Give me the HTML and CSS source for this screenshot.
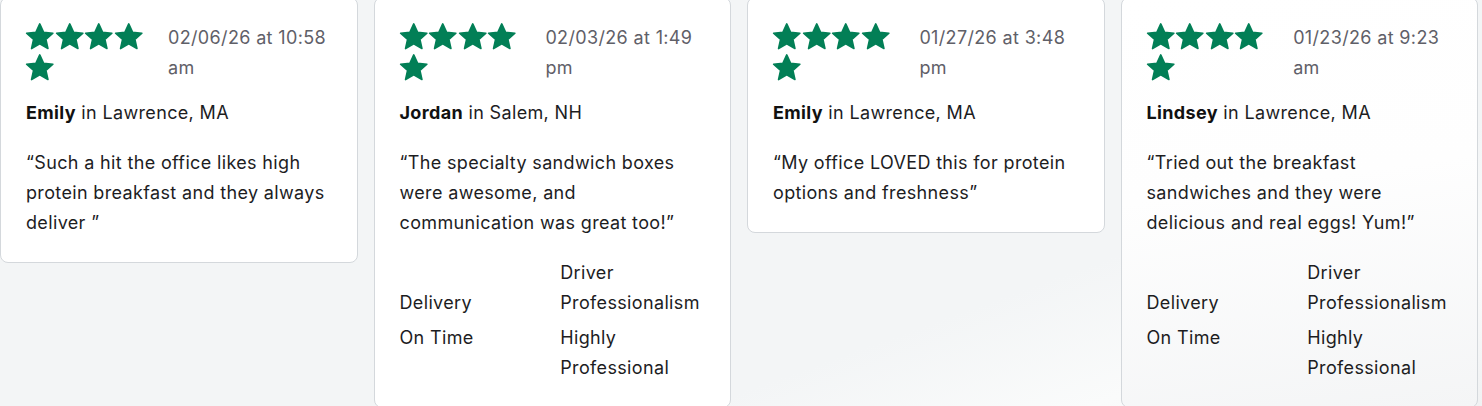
FILE: index.html
```html
<!DOCTYPE html>
<html lang="en">
<head>
<meta charset="utf-8">
<link rel="stylesheet" href="styles.css">
</head>
<body>
<div class="reviews">
  <article class="card">
    <div class="head">
      <div class="stars">
        <svg class="star" viewBox="1 1 22 22"><path d="M12 2.2l2.9 6.3 6.9.7-5.2 4.6 1.5 6.8L12 17.1l-6.1 3.5 1.5-6.8-5.2-4.6 6.9-.7z"/></svg>
        <svg class="star" viewBox="1 1 22 22"><path d="M12 2.2l2.9 6.3 6.9.7-5.2 4.6 1.5 6.8L12 17.1l-6.1 3.5 1.5-6.8-5.2-4.6 6.9-.7z"/></svg>
        <svg class="star" viewBox="1 1 22 22"><path d="M12 2.2l2.9 6.3 6.9.7-5.2 4.6 1.5 6.8L12 17.1l-6.1 3.5 1.5-6.8-5.2-4.6 6.9-.7z"/></svg>
        <svg class="star" viewBox="1 1 22 22"><path d="M12 2.2l2.9 6.3 6.9.7-5.2 4.6 1.5 6.8L12 17.1l-6.1 3.5 1.5-6.8-5.2-4.6 6.9-.7z"/></svg>
        <svg class="star" viewBox="1 1 22 22"><path d="M12 2.2l2.9 6.3 6.9.7-5.2 4.6 1.5 6.8L12 17.1l-6.1 3.5 1.5-6.8-5.2-4.6 6.9-.7z"/></svg>
      </div>
      <div class="date">02/06/26 at 10:58 am</div>
    </div>
    <p class="who"><strong>Emily</strong> in Lawrence, MA</p>
    <p class="quote">“Such a hit the office likes high protein breakfast and they always deliver ”</p>
  </article>

  <article class="card">
    <div class="head">
      <div class="stars">
        <svg class="star" viewBox="1 1 22 22"><path d="M12 2.2l2.9 6.3 6.9.7-5.2 4.6 1.5 6.8L12 17.1l-6.1 3.5 1.5-6.8-5.2-4.6 6.9-.7z"/></svg>
        <svg class="star" viewBox="1 1 22 22"><path d="M12 2.2l2.9 6.3 6.9.7-5.2 4.6 1.5 6.8L12 17.1l-6.1 3.5 1.5-6.8-5.2-4.6 6.9-.7z"/></svg>
        <svg class="star" viewBox="1 1 22 22"><path d="M12 2.2l2.9 6.3 6.9.7-5.2 4.6 1.5 6.8L12 17.1l-6.1 3.5 1.5-6.8-5.2-4.6 6.9-.7z"/></svg>
        <svg class="star" viewBox="1 1 22 22"><path d="M12 2.2l2.9 6.3 6.9.7-5.2 4.6 1.5 6.8L12 17.1l-6.1 3.5 1.5-6.8-5.2-4.6 6.9-.7z"/></svg>
        <svg class="star" viewBox="1 1 22 22"><path d="M12 2.2l2.9 6.3 6.9.7-5.2 4.6 1.5 6.8L12 17.1l-6.1 3.5 1.5-6.8-5.2-4.6 6.9-.7z"/></svg>
      </div>
      <div class="date">02/03/26 at 1:49 pm</div>
    </div>
    <p class="who"><strong>Jordan</strong> in Salem, NH</p>
    <p class="quote">“The specialty sandwich boxes were awesome, and communication was great too!”</p>
    <dl class="details">
      <dt>Delivery</dt>
      <dt>Driver Professionalism</dt>
      <dd>On Time</dd>
      <dd>Highly Professional</dd>
    </dl>
  </article>

  <article class="card">
    <div class="head">
      <div class="stars">
        <svg class="star" viewBox="1 1 22 22"><path d="M12 2.2l2.9 6.3 6.9.7-5.2 4.6 1.5 6.8L12 17.1l-6.1 3.5 1.5-6.8-5.2-4.6 6.9-.7z"/></svg>
        <svg class="star" viewBox="1 1 22 22"><path d="M12 2.2l2.9 6.3 6.9.7-5.2 4.6 1.5 6.8L12 17.1l-6.1 3.5 1.5-6.8-5.2-4.6 6.9-.7z"/></svg>
        <svg class="star" viewBox="1 1 22 22"><path d="M12 2.2l2.9 6.3 6.9.7-5.2 4.6 1.5 6.8L12 17.1l-6.1 3.5 1.5-6.8-5.2-4.6 6.9-.7z"/></svg>
        <svg class="star" viewBox="1 1 22 22"><path d="M12 2.2l2.9 6.3 6.9.7-5.2 4.6 1.5 6.8L12 17.1l-6.1 3.5 1.5-6.8-5.2-4.6 6.9-.7z"/></svg>
        <svg class="star" viewBox="1 1 22 22"><path d="M12 2.2l2.9 6.3 6.9.7-5.2 4.6 1.5 6.8L12 17.1l-6.1 3.5 1.5-6.8-5.2-4.6 6.9-.7z"/></svg>
      </div>
      <div class="date">01/27/26 at 3:48 pm</div>
    </div>
    <p class="who"><strong>Emily</strong> in Lawrence, MA</p>
    <p class="quote">“My office LOVED this for protein options and freshness”</p>
  </article>

  <article class="card card-faded">
    <div class="head">
      <div class="stars">
        <svg class="star" viewBox="1 1 22 22"><path d="M12 2.2l2.9 6.3 6.9.7-5.2 4.6 1.5 6.8L12 17.1l-6.1 3.5 1.5-6.8-5.2-4.6 6.9-.7z"/></svg>
        <svg class="star" viewBox="1 1 22 22"><path d="M12 2.2l2.9 6.3 6.9.7-5.2 4.6 1.5 6.8L12 17.1l-6.1 3.5 1.5-6.8-5.2-4.6 6.9-.7z"/></svg>
        <svg class="star" viewBox="1 1 22 22"><path d="M12 2.2l2.9 6.3 6.9.7-5.2 4.6 1.5 6.8L12 17.1l-6.1 3.5 1.5-6.8-5.2-4.6 6.9-.7z"/></svg>
        <svg class="star" viewBox="1 1 22 22"><path d="M12 2.2l2.9 6.3 6.9.7-5.2 4.6 1.5 6.8L12 17.1l-6.1 3.5 1.5-6.8-5.2-4.6 6.9-.7z"/></svg>
        <svg class="star" viewBox="1 1 22 22"><path d="M12 2.2l2.9 6.3 6.9.7-5.2 4.6 1.5 6.8L12 17.1l-6.1 3.5 1.5-6.8-5.2-4.6 6.9-.7z"/></svg>
      </div>
      <div class="date">01/23/26 at 9:23 am</div>
    </div>
    <p class="who"><strong>Lindsey</strong> in Lawrence, MA</p>
    <p class="quote">“Tried out the breakfast sandwiches and they were delicious and real eggs! Yum!”</p>
    <dl class="details">
      <dt>Delivery</dt>
      <dt>Driver Professionalism</dt>
      <dd>On Time</dd>
      <dd>Highly Professional</dd>
    </dl>
  </article>
</div>
</body>
</html>
```

FILE: styles.css
```css
html, body {
  margin: 0;
  padding: 0;
}
body {
  width: 1482px;
  height: 406px;
  overflow: hidden;
  background: linear-gradient(160deg, #f3f5f6 0%, #f3f5f6 70%, #fafbfb 85%, #f1f2f3 100%);
  font-family: Inter, "Noto Sans", sans-serif;
  color: #1d1d1f;
  letter-spacing: 0.35px;
}
.reviews {
  display: grid;
  grid-template-columns: repeat(4, 357.5px);
  column-gap: 16px;
  align-items: start;
  margin-top: -3px;
}
.card {
  background: #fff;
  border: 1px solid #d4d8dc;
  border-radius: 8px;
  padding: 24px 25px 24px;
}
.card-faded {
  background: linear-gradient(172deg, #ffffff 0%, #fefefe 45%, #f4f5f6 100%);
}
.head {
  display: flex;
  gap: 16px;
  margin-bottom: 15px;
}
.stars {
  flex: 1 1 auto;
  display: flex;
  flex-wrap: wrap;
  align-content: flex-start;
  row-gap: 1px;
  margin-left: -1px;
}
.star {
  flex: none;
  width: 29.5px;
  height: 30px;
  fill: #027f56;
  stroke: #027f56;
  stroke-width: 1.2;
  stroke-linejoin: round;
}
.date {
  flex: 1 1 auto;
  font-size: 18px;
  line-height: 30px;
  color: #5f6068;
  padding-top: 1px;
}
.who {
  margin: 0 0 20px;
  font-size: 18px;
  line-height: 30px;
}
.who strong {
  font-weight: 700;
  color: #111;
}
.quote {
  margin: 0;
  font-size: 18px;
  line-height: 30px;
}
.details {
  display: grid;
  grid-template-columns: 1fr 1fr;
  column-gap: 16px;
  row-gap: 5px;
  margin: 20px 0 0;
  font-size: 18px;
  line-height: 30px;
}
.details dt {
  align-self: end;
}
.details dd {
  margin: 0;
}
```
